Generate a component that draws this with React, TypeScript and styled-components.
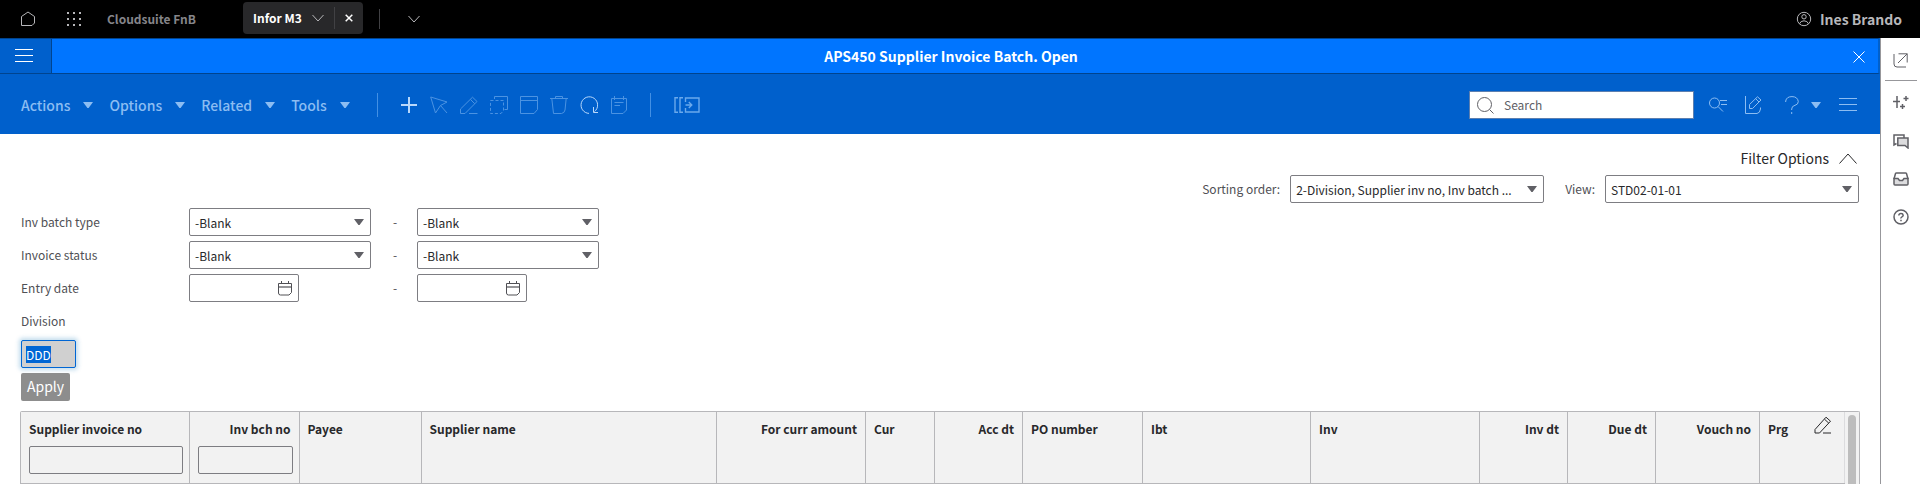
import React, { useEffect, useRef } from "react";
import styled, { createGlobalStyle } from "styled-components";

const Global = createGlobalStyle`
  *, *::before, *::after { box-sizing: border-box; }
  html, body, #root { height: 100%; }
  body { margin: 0; overflow: hidden; background: #fff; color: #28282a; }
  body, button, input, select {
    font-family: "Noto Sans CJK SC", "Source Sans Pro", "Noto Sans", sans-serif;
    font-size: 12px;
    font-weight: 400;
    line-height: 20px;
  }
  button { margin: 0; padding: 0; border: 0; background: none; color: inherit; cursor: pointer; }
  svg { display: block; flex: none; }
`;

const Shell = styled.div`
  display: flex;
  flex-direction: column;
  height: 100%;
`;

/* ---------- top bar ---------- */

const TopBar = styled.header`
  display: flex;
  align-items: center;
  flex: none;
  height: 38px;
  padding: 0 18px 0 16px;
  background: #000;
  color: #b7b7ba;
`;

const BarButton = styled.button<{ $gap?: number }>`
  display: flex;
  align-items: center;
  justify-content: center;
  width: 24px;
  height: 24px;
  margin-right: ${(p) => p.$gap ?? 0}px;
`;

const Workspace = styled.a`
  width: 136px;
  color: #85858a;
  font-weight: 700;
  text-decoration: none;
`;

const Tab = styled.div`
  display: flex;
  align-items: center;
  height: 32px;
  margin-bottom: 2px;
  border-radius: 4px;
  background: #28282a;
  color: #fff;
`;

const TabName = styled.button`
  display: flex;
  align-items: center;
  gap: 10px;
  height: 22px;
  padding: 0 10px;
  border-right: 1px solid #414144;
  font-weight: 700;
  & > svg { color: #b7b7ba; }
`;

const TabClose = styled.button`
  display: flex;
  align-items: center;
  justify-content: center;
  width: 28px;
  height: 22px;
`;

const BarRule = styled.span`
  width: 1px;
  height: 20px;
  margin: 0 22px 0 16px;
  background: #414144;
`;

const User = styled.button`
  display: flex;
  align-items: center;
  gap: 8px;
  margin-left: auto;
  font-size: 14px;
  font-weight: 700;
`;

/* ---------- page frame ---------- */

const Body = styled.div`
  display: flex;
  flex: 1;
  min-height: 0;
`;

const Main = styled.main`
  display: flex;
  flex-direction: column;
  flex: 1;
  min-width: 0;
`;

const Rail = styled.aside`
  display: flex;
  flex-direction: column;
  align-items: center;
  width: 40px;
  border-left: 1px solid #97979b;
  color: #606066;
`;

const RailButton = styled.button`
  display: flex;
  align-items: center;
  justify-content: center;
  width: 32px;
  height: 38px;
`;

const RailTop = styled.div`
  padding: 3px 0 1px;
  margin-bottom: 3px;
  border-bottom: 1px solid #97979b;
`;

const TitleBar = styled.div`
  display: flex;
  flex: none;
  height: 36px;
  border-top: 1px solid #00448f;
  border-bottom: 1px solid #00448f;
  border-right: 2px solid #0060cc;
  background: #0075ff;
  color: #fff;
`;

const MenuButton = styled.button`
  display: flex;
  align-items: center;
  width: 52px;
  padding-left: 15px;
  border-right: 1px solid #00448f;
  background: #0060cc;
`;

const Title = styled.h1`
  flex: 1;
  margin: 0;
  font-size: 14px;
  font-weight: 700;
  line-height: 34px;
  text-align: center;
`;

const TitleClose = styled.button`
  display: flex;
  align-items: center;
  width: 28px;
  padding: 2px 0 0 3px;
`;

/* ---------- toolbar ---------- */

const Toolbar = styled.div`
  display: flex;
  align-items: center;
  flex: none;
  height: 60px;
  padding: 2px 17px 0 21px;
  background: #0060cc;
  color: #8cbdf2;
`;

const MenuItem = styled.button`
  display: flex;
  align-items: center;
  gap: 13px;
  margin-right: 16px;
  font-size: 14px;
  font-weight: 500;
`;

const ToolRule = styled.span<{ $left: number; $right: number }>`
  width: 1px;
  height: 24px;
  margin: 0 ${(p) => p.$right}px 0 ${(p) => p.$left}px;
  background: #4390e4;
`;

const Tool = styled.button<{ $tone?: string }>`
  display: flex;
  align-items: center;
  justify-content: center;
  width: 30px;
  height: 30px;
  color: ${(p) => p.$tone ?? "#4b93e2"};
`;

const SearchBox = styled.label`
  display: flex;
  align-items: center;
  width: 225px;
  height: 28px;
  margin-left: auto;
  margin-right: 9px;
  padding-left: 7px;
  gap: 10px;
  border: 1px solid #5c7fb0;
  background: #fff;
  color: #606066;
`;

const SearchInput = styled.input`
  flex: 1;
  min-width: 0;
  padding: 0;
  border: 0;
  outline: 0;
  background: none;
  color: #28282a;
  &::placeholder { color: #606066; opacity: 1; }
`;

const RightTools = styled.div`
  display: flex;
  align-items: center;
  color: #8cbdf2;
`;

const RightTool = styled.button<{ $width: number }>`
  display: flex;
  align-items: center;
  justify-content: center;
  width: ${(p) => p.$width}px;
  height: 30px;
  gap: 12px;
`;

/* ---------- filters ---------- */

const Content = styled.div`
  display: flex;
  flex-direction: column;
  flex: 1;
  min-height: 0;
  padding: 12px 20px 0;
`;

const FilterToggle = styled.button`
  display: flex;
  align-items: center;
  align-self: flex-end;
  gap: 10px;
  height: 24px;
  margin-right: 3px;
  font-size: 14px;
`;

const SortRow = styled.div`
  display: flex;
  align-items: center;
  justify-content: flex-end;
  margin-top: 5px;
  padding-right: 1px;
`;

const SortLabel = styled.label`
  margin: 0 10px 0 21px;
  color: #505055;
`;

const SelectWrap = styled.span<{ $width: number }>`
  display: grid;
  align-items: center;
  width: ${(p) => p.$width}px;
  color: #606066;
  & > * { grid-area: 1 / 1; }
  & > svg { justify-self: end; margin-right: 7px; pointer-events: none; }
`;

const Select = styled.select`
  width: 100%;
  height: 28px;
  padding: 1px 18px 0 5px;
  appearance: none;
  border: 1px solid #7d7d82;
  border-radius: 2px;
  background: #fff;
  color: #28282a;
`;

const FilterForm = styled.form`
  display: flex;
  flex-direction: column;
  align-items: flex-start;
  gap: 5px;
  margin-top: 5px;
  padding-left: 1px;
`;

const FilterRow = styled.div`
  display: grid;
  grid-template-columns: 168px 182px 46px 182px;
  align-items: center;
  min-height: 28px;
  color: #505055;
`;

const Dash = styled.span`
  padding-left: 22px;
`;

const DateBox = styled.span`
  display: flex;
  align-items: center;
  width: 110px;
  height: 28px;
  padding: 0 6px;
  border: 1px solid #7d7d82;
  border-radius: 2px;
`;

const DateInput = styled.input`
  flex: 1;
  min-width: 0;
  border: 0;
  outline: 0;
  background: none;
`;

const DivisionInput = styled.input`
  width: 55px;
  height: 28px;
  padding: 0 4px;
  border: 1px solid #0066d4;
  border-radius: 2px;
  outline: 0;
  background: #d0d0d0;
  box-shadow: 0 0 4px 2px rgba(54, 138, 192, 0.3);
  &::selection { background: #0066d4; color: #fff; }
`;

const Apply = styled.button`
  height: 28px;
  padding: 0 6px 2px;
  border-radius: 2px;
  background: #8d8d8d;
  color: #fff;
  font-size: 14px;
`;

/* ---------- grid ---------- */

const GridFrame = styled.div`
  display: flex;
  flex: 1;
  min-height: 0;
  margin-top: 10px;
  border: 1px solid #b7b7ba;
  border-bottom: 0;
  border-radius: 2px 2px 0 0;
  overflow: hidden;
`;

const Grid = styled.table`
  flex: 1;
  width: 100%;
  height: 100%;
  border-collapse: collapse;
  table-layout: fixed;
`;

const Head = styled.th<{ $end?: boolean }>`
  height: 71px;
  padding: 7px 8px 0;
  border-right: 1px solid #b7b7ba;
  border-bottom: 1px solid #b7b7ba;
  background: #f2f2f2;
  font-size: 12px;
  font-weight: 700;
  text-align: ${(p) => (p.$end ? "right" : "left")};
  vertical-align: top;
  white-space: nowrap;
  &:last-child { border-right-color: #dcdcde; }
`;

const HeadLine = styled.div`
  display: flex;
  justify-content: space-between;
  align-items: flex-start;
`;

const EditButton = styled.button`
  width: 18px;
  height: 18px;
  margin: -3px 4px 0 0;
`;

const Cell = styled.td`
  border-right: 1px solid #b7b7ba;
`;

const HeadInput = styled.input`
  display: block;
  width: calc(100% + 2px);
  height: 28px;
  margin-top: 7px;
  border: 1px solid #7d7d82;
  border-radius: 2px;
  background: #f2f2f2;
`;

const ScrollTrack = styled.div`
  width: 14px;
  padding: 3px 3px 0;
  background: #f2f2f2;
`;

const ScrollThumb = styled.div`
  height: 100%;
  border-radius: 4px 4px 0 0;
  background: #bdbdbd;
`;

/* ---------- icons ---------- */

type IconProps = { w: number; h: number; sw?: number; children: React.ReactNode };

const Icon = ({ w, h, sw = 1, children }: IconProps) => (
  <svg width={w} height={h} viewBox={`0 0 ${w} ${h}`} fill="none" stroke="currentColor" strokeWidth={sw} aria-hidden="true">
    {children}
  </svg>
);

const Caret = () => (
  <svg width="10" height="6" viewBox="0 0 10 6" fill="currentColor" aria-hidden="true">
    <path d="M0 0H10L5.6 6H4.4Z" />
  </svg>
);

const Chevron = () => (
  <Icon w={12} h={8}><path d="M.5 1L6 7L11.5 1" /></Icon>
);

const Bars = () => (
  <Icon w={18} h={14}><path d="M0 .5H18M0 6.5H18M0 12.5H18" /></Icon>
);

const CalendarIcon = () => (
  <Icon w={14} h={15}>
    <path d="M.5 2.5H13.5V11.5L11 14H2.5Q.5 14 .5 12V2.5ZM3.5 0V2.5M10.5 0V2.5" />
    <path d="M.5 6H13.5" strokeWidth="2" opacity=".6" />
  </Icon>
);

/* ---------- data ---------- */

type Column = { name: string; width?: number; end?: boolean; filter?: boolean; edit?: boolean };

const columns: Column[] = [
  { name: "Supplier invoice no", width: 168, filter: true },
  { name: "Inv bch no", width: 110, end: true, filter: true },
  { name: "Payee", width: 122 },
  { name: "Supplier name" },
  { name: "For curr amount", width: 149, end: true },
  { name: "Cur", width: 69 },
  { name: "Acc dt", width: 88, end: true },
  { name: "PO number", width: 120 },
  { name: "Ibt", width: 168 },
  { name: "Inv", width: 169 },
  { name: "Inv dt", width: 88, end: true },
  { name: "Due dt", width: 88, end: true },
  { name: "Vouch no", width: 104, end: true },
  { name: "Prg", width: 85, edit: true },
];

const Picker = ({ id, width, value, label }: { id: string; width: number; value: string; label?: string }) => (
  <SelectWrap $width={width}>
    <Select id={id} aria-label={label} defaultValue={value}>
      <option>{value}</option>
    </Select>
    <Caret />
  </SelectWrap>
);

const DateField = ({ id, label }: { id: string; label?: string }) => (
  <DateBox>
    <DateInput id={id} type="text" aria-label={label} />
    <CalendarIcon />
  </DateBox>
);

export default function App() {
  const division = useRef<HTMLInputElement>(null);

  useEffect(() => {
    division.current?.focus();
    division.current?.select();
  }, []);

  return (
    <Shell>
      <Global />
      <TopBar>
        <BarButton $gap={22} aria-label="Home">
          <Icon w={16} h={16}><path d="M1.5 5.5L8 1L14.5 5.5V12L12 14.5H1.5Z" strokeLinejoin="round" /></Icon>
        </BarButton>
        <BarButton $gap={21} aria-label="Applications">
          <svg width="14" height="14" viewBox="0 0 14 14" fill="currentColor" aria-hidden="true">
            {[0, 6, 12].map((y) => [0, 6, 12].map((x) => <rect key={`${x}-${y}`} x={x} y={y} width="2" height="2" />))}
          </svg>
        </BarButton>
        <Workspace href="#">Cloudsuite FnB</Workspace>
        <Tab>
          <TabName>Infor M3 <Chevron /></TabName>
          <TabClose aria-label="Close tab">
            <Icon w={8} h={8} sw={1.5}><path d="M.7 .7L7.3 7.3M7.3 .7L.7 7.3" /></Icon>
          </TabClose>
        </Tab>
        <BarRule />
        <BarButton aria-label="More tabs"><Chevron /></BarButton>
        <User>
          <Icon w={16} h={16}>
            <circle cx="8" cy="8" r="6.7" />
            <circle cx="8" cy="5.8" r="2.2" />
            <path d="M3.5 12.8Q4.5 9.8 8 9.8T12.5 12.8" />
          </Icon>
          Ines Brando
        </User>
      </TopBar>

      <Body>
        <Main>
          <TitleBar>
            <MenuButton aria-label="Menu"><Bars /></MenuButton>
            <Title>APS450 Supplier Invoice Batch. Open</Title>
            <TitleClose aria-label="Close">
              <Icon w={12} h={12}><path d="M.5 .5L11.5 11.5M11.5 .5L.5 11.5" /></Icon>
            </TitleClose>
          </TitleBar>

          <Toolbar>
            {["Actions", "Options", "Related", "Tools"].map((name) => (
              <MenuItem key={name}>{name}<Caret /></MenuItem>
            ))}
            <ToolRule $left={11} $right={16} />
            <Tool aria-label="Create" $tone="#b8d8fb">
              <Icon w={16} h={16} sw={2}><path d="M8 0V16M0 8H16" /></Icon>
            </Tool>
            <Tool aria-label="Select">
              <Icon w={18} h={18}><path d="M.7 1L17 6L10.5 9.5L5.5 17ZM10.5 9.5L17 17" /></Icon>
            </Tool>
            <Tool aria-label="Change">
              <Icon w={18} h={18}><path d="M.5 17.5V13L12.5 1.2L17 5.5L5 17.5ZM10.5 3.5L14.8 7.8M9 17.5H17.5" /></Icon>
            </Tool>
            <Tool aria-label="Copy">
              <Icon w={18} h={18}>
                <path d="M4.5 3V.5H17.5V13.5H14.5" />
                <path d="M.5 4.5H13.5V14.5L11 17.5H.5Z" strokeDasharray="3 2" />
              </Icon>
            </Tool>
            <Tool aria-label="Display">
              <Icon w={18} h={18}><path d="M.5 .5H17.5V13.5L14 17.5H.5ZM.5 4.5H17.5" /></Icon>
            </Tool>
            <Tool aria-label="Delete">
              <Icon w={18} h={18}><path d="M0 2.5H18M5.5 2.5V.5H12.5V2.5M1.8 2.5L3.5 17.5H11.5Q14.5 17 15 14L16.2 2.5" /></Icon>
            </Tool>
            <Tool aria-label="Refresh" $tone="#b8d8fb">
              <Icon w={18} h={18}><path d="M9 17.4A8.3 8.3 0 1 1 14.5 15.6M13.5 11V16.5H18.5" /></Icon>
            </Tool>
            <Tool aria-label="Notes">
              <Icon w={16} h={18}><path d="M.5 2.5H15.5V14L12 17.5H.5ZM3.5 0V4M12.5 0V4M3.5 6.5H12.5M3.5 9.5H9" /></Icon>
            </Tool>
            <ToolRule $left={16} $right={21} />
            <Tool aria-label="Go to next" $tone="#6aa9ec">
              <Icon w={26} h={16}>
                <path d="M4 .8H1V15.2H4M9 .8H6V15.2H9M11.5 5V1H25V15H11.5V11M11.5 8H17.5M14.8 5L17.8 8L14.8 11" strokeWidth="1.4" />
              </Icon>
            </Tool>

            <SearchBox>
              <Icon w={17} h={17}><circle cx="7.5" cy="7.5" r="7" /><path d="M12.5 12.5L16.5 16.5" /></Icon>
              <SearchInput type="text" placeholder="Search" aria-label="Search" />
            </SearchBox>
            <RightTools>
              <RightTool $width={30} aria-label="Find records">
                <Icon w={18} h={16}><circle cx="5.5" cy="6" r="5" /><path d="M9 9.5L14 14.5M11 3.5H18M12 7.5H18" /></Icon>
              </RightTool>
              <RightTool $width={40} aria-label="Personalize">
                <Icon w={18} h={18}><path d="M1.5 0V17.5H13Q16 17 16.5 13V11.5M5.5 8.5L13.5 .8L17 4L8.5 12.5H5.5ZM11.5 2.5L15 6" /></Icon>
              </RightTool>
              <RightTool $width={60} aria-label="Help">
                <Icon w={14} h={18}><path d="M.7 6V5Q1.5 .6 7 .6T13.3 5.5Q13.3 8.5 10 9.3T6.7 13V14M6.7 16V18" /></Icon>
                <Caret />
              </RightTool>
              <RightTool $width={30} aria-label="More"><Bars /></RightTool>
            </RightTools>
          </Toolbar>

          <Content>
            <FilterToggle>
              Filter Options
              <Icon w={18} h={11}><path d="M.5 10.5L9 1L17.5 10.5" /></Icon>
            </FilterToggle>
            <SortRow>
              <SortLabel htmlFor="sorting">Sorting order:</SortLabel>
              <Picker id="sorting" width={254} value="2-Division, Supplier inv no, Inv batch ..." />
              <SortLabel htmlFor="view">View:</SortLabel>
              <Picker id="view" width={254} value="STD02-01-01" />
            </SortRow>

            <FilterForm onSubmit={(e) => e.preventDefault()}>
              <FilterRow>
                <label htmlFor="type-from">Inv batch type</label>
                <Picker id="type-from" width={182} value="-Blank" />
                <Dash>-</Dash>
                <Picker id="type-to" width={182} value="-Blank" label="Inv batch type to" />
              </FilterRow>
              <FilterRow>
                <label htmlFor="status-from">Invoice status</label>
                <Picker id="status-from" width={182} value="-Blank" />
                <Dash>-</Dash>
                <Picker id="status-to" width={182} value="-Blank" label="Invoice status to" />
              </FilterRow>
              <FilterRow>
                <label htmlFor="date-from">Entry date</label>
                <DateField id="date-from" />
                <Dash>-</Dash>
                <DateField id="date-to" label="Entry date to" />
              </FilterRow>
              <FilterRow>
                <label htmlFor="division">Division</label>
              </FilterRow>
              <DivisionInput id="division" ref={division} type="text" defaultValue="DDD" />
              <Apply type="submit">Apply</Apply>
            </FilterForm>

            <GridFrame>
              <Grid>
                <colgroup>
                  {columns.map((c) => <col key={c.name} width={c.width} />)}
                </colgroup>
                <thead>
                  <tr>
                    {columns.map((c) => (
                      <Head key={c.name} $end={c.end} scope="col">
                        {c.edit ? (
                          <HeadLine>
                            {c.name}
                            <EditButton aria-label="Edit columns">
                              <Icon w={18} h={18}><path d="M1 17V13.5L12 1.2L16.5 5.2L5.5 17ZM10.5 3.2L14.8 7.2M9 17H17" /></Icon>
                            </EditButton>
                          </HeadLine>
                        ) : c.name}
                        {c.filter && <HeadInput type="text" aria-label={`Filter ${c.name}`} />}
                      </Head>
                    ))}
                  </tr>
                </thead>
                <tbody>
                  <tr>{columns.map((c) => <Cell key={c.name} />)}</tr>
                </tbody>
              </Grid>
              <ScrollTrack><ScrollThumb /></ScrollTrack>
            </GridFrame>
          </Content>
        </Main>

        <Rail>
          <RailTop>
            <RailButton aria-label="Open in new window">
              <Icon w={15} h={15}><path d="M1 1V11Q1 14 4 14H13M5.5 .8H14.2V9.5M14.2 .8L5 10" /></Icon>
            </RailButton>
          </RailTop>
          <RailButton aria-label="Assistant">
            <Icon w={16} h={16}><path d="M4 1V13M0 6.5H7M13 1V6M10.5 3.5H15.5M9.5 9V14M7 11.5H12" strokeWidth="1.5" /></Icon>
          </RailButton>
          <RailButton aria-label="Conversations">
            <Icon w={16} h={15} sw={1.5}>
              <path d="M3.5 9.5L1 11V1H11V4" />
              <path d="M4.8 4H15V14L12 11.5H4.8Z" fill="#dcdcde" />
            </Icon>
          </RailButton>
          <RailButton aria-label="Inbox">
            <Icon w={16} h={14} sw={1.5}>
              <path d="M1 6.5H5L6.5 8.5H9.5L11 6.5H15V12Q15 13 14 13H2Q1 13 1 12Z" fill="#dcdcde" />
              <path d="M1 7L2.5 1.5Q2.7 1 3.5 1H12.5Q13.3 1 13.5 1.5L15 7" />
            </Icon>
          </RailButton>
          <RailButton aria-label="Help">
            <Icon w={16} h={16} sw={1.5}>
              <circle cx="8" cy="8" r="7" />
              <path d="M5.8 6.5Q6 4.5 8 4.5T10.2 6.3Q10.2 7.4 9 7.9T8 9.5M8 10.7V12.2" />
            </Icon>
          </RailButton>
        </Rail>
      </Body>
    </Shell>
  );
}
